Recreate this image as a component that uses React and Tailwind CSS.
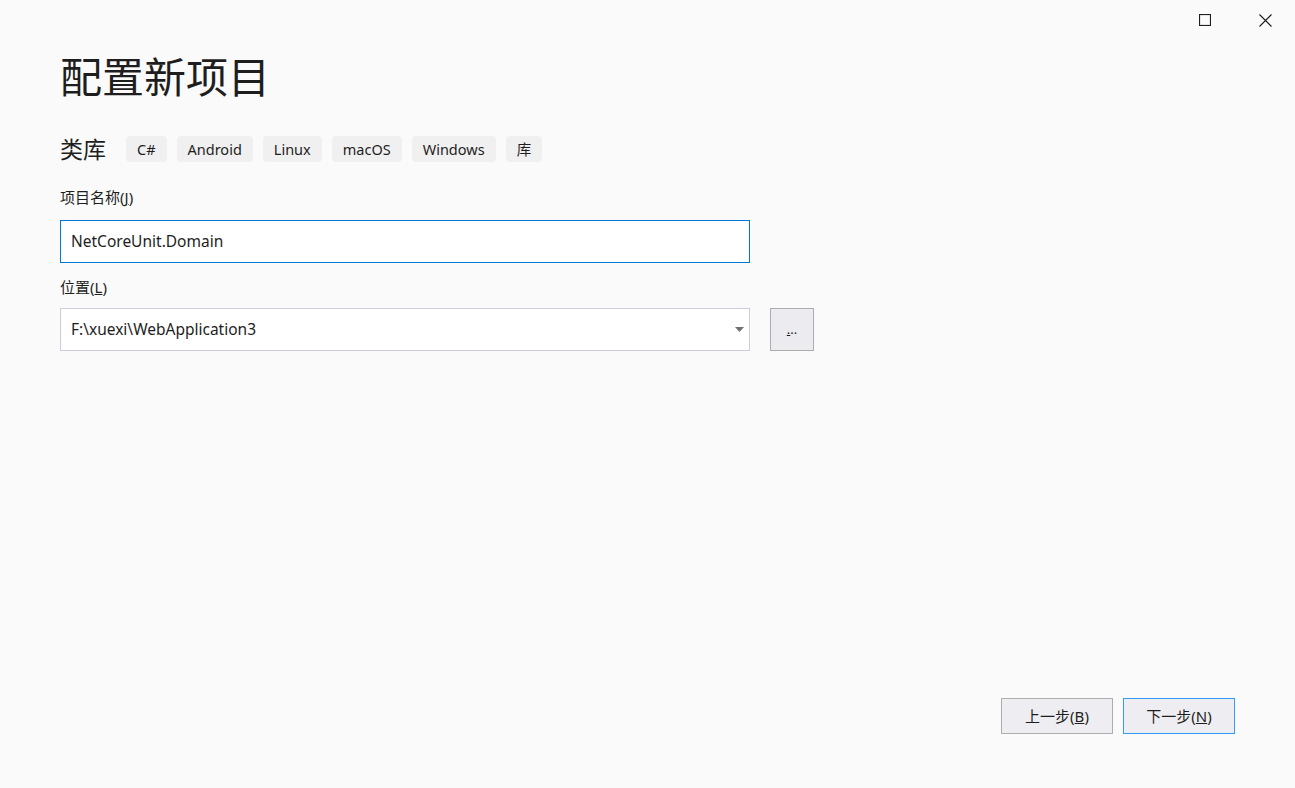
import React from 'react';

const tags = ['C#', 'Android', 'Linux', 'macOS', 'Windows', '库'];

const font = { fontFamily: '"Noto Sans", "Noto Sans CJK SC", sans-serif' };

export default function App() {
  return (
    <div className="h-screen w-full bg-[#fafafa] text-[#1e1e1e] flex flex-col overflow-hidden" style={font}>
      {/* window controls */}
      <div className="flex justify-end h-[40px] shrink-0">
        <button className="w-[60px] h-[40px] flex items-center justify-center">
          <svg width="12" height="12" viewBox="0 0 12 12">
            <rect x="0.5" y="0.5" width="11" height="11" fill="none" stroke="#1e1e1e" strokeWidth="1.2" />
          </svg>
        </button>
        <button className="w-[60px] h-[40px] flex items-center justify-center">
          <svg width="13" height="13" viewBox="0 0 13 13">
            <path d="M0.5 0.5 L12.5 12.5 M12.5 0.5 L0.5 12.5" stroke="#1e1e1e" strokeWidth="1.1" />
          </svg>
        </button>
      </div>

      <div className="flex-1 flex flex-col pl-[60px] pr-[60px]">
        <h1 className="text-[42px] leading-[52px] font-normal mt-[11px]">配置新项目</h1>

        <div className="flex items-center mt-[33px] h-[26px]">
          <span className="text-[23px] leading-[26px] mr-[20px]">类库</span>
          <div className="flex gap-[10px]">
            {tags.map((t) => (
              <span key={t} className="h-[26px] px-[11px] rounded-[4px] bg-[#f0f0f0] text-[14.5px] leading-[26px]">
                {t}
              </span>
            ))}
          </div>
        </div>

        <label className="mt-[25px] text-[15px] leading-[20px]">
          项目名称(<span className="underline">J</span>)
        </label>
        <div className="mt-[13px] w-[690px] h-[43px] bg-white border border-[#0078d4] flex items-center px-[10px] text-[15.5px]">
          NetCoreUnit.Domain
        </div>

        <label className="mt-[14px] text-[15px] leading-[20px]">
          位置(<span className="underline">L</span>)
        </label>
        <div className="mt-[11px] flex gap-[20px]">
          <div className="w-[690px] h-[43px] bg-white border border-[#ccccdc] flex items-center pl-[10px] pr-[5px] text-[15.5px]">
            <span className="flex-1">F:\xuexi\WebApplication3</span>
            <svg width="9" height="5" viewBox="0 0 9 5">
              <path d="M0 0 L9 0 L4.5 5 Z" fill="#717171" />
            </svg>
          </div>
          <button className="w-[44px] h-[43px] bg-[#ececf0] border border-[#adadad] text-[13px] flex items-center justify-center">
            <span className="underline">.</span>..
          </button>
        </div>

        <div className="flex-1" />

        <div className="flex justify-end gap-[10px] mb-[54px]">
          <button className="w-[112px] h-[36px] bg-[#eeeef2] border border-[#adadad] text-[15px]">
            上一步(<span className="underline">B</span>)
          </button>
          <button className="w-[112px] h-[36px] bg-[#eeeef2] border border-[#3399ff] text-[15px]">
            下一步(<span className="underline">N</span>)
          </button>
        </div>
      </div>
    </div>
  );
}
